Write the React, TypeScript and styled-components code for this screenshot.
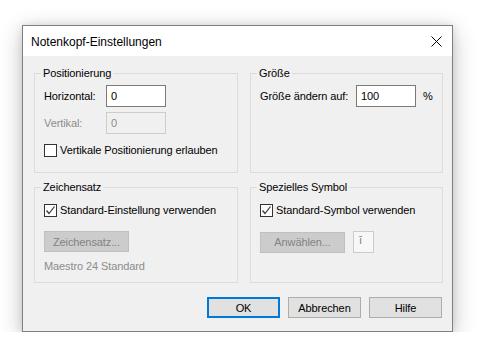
import React from "react";
import styled, { createGlobalStyle } from "styled-components";

const GlobalStyle = createGlobalStyle`
  html, body {
    margin: 0;
    padding: 0;
    background: #ffffff;
  }
  body {
    font-family: "Liberation Sans", Arial, sans-serif;
    font-size: 11px;
    letter-spacing: -0.1px;
    color: #000000;
    white-space: nowrap;
  }
`;

const Page = styled.div`
  padding: 25px 0 0 22px;
`;

const Dialog = styled.div`
  width: 429px;
  height: 305px;
  border: 1px solid #7f7f7f;
  background: #f0f0f0;
  box-shadow: 0 6px 22px rgba(0, 0, 0, 0.24), 0 0 8px rgba(0, 0, 0, 0.1);
  display: flex;
  flex-direction: column;
`;

const TitleBar = styled.div`
  height: 30px;
  background: #ffffff;
  display: flex;
  align-items: center;
  justify-content: space-between;
  padding: 0 10px 0 8px;
`;

const Title = styled.span`
  font-size: 12px;
  letter-spacing: 0;
  padding-top: 1px;
`;

const CloseButton = styled.button`
  width: 12px;
  height: 12px;
  padding: 0;
  border: none;
  background: transparent;
  display: flex;
  align-items: center;
  justify-content: center;
`;

const Body = styled.div`
  flex: 1;
  padding: 17px 10px 13px 11px;
  display: flex;
  flex-direction: column;
`;

const Grid = styled.div`
  display: grid;
  grid-template-columns: 204px 193px;
  grid-template-rows: 100px 96px;
  column-gap: 12px;
  row-gap: 14px;
`;

const Group = styled.div<{ $top: number }>`
  position: relative;
  border: 1px solid #dcdcdc;
  padding: ${(p) => p.$top}px 8px 0 9px;
  display: flex;
  flex-direction: column;
  align-items: flex-start;
`;

const Caption = styled.span`
  position: absolute;
  top: -9px;
  left: 6px;
  padding: 0 2px;
  line-height: 16px;
  background: #f0f0f0;
`;

const FieldRow = styled.div`
  display: flex;
  align-items: center;
  margin-bottom: 5px;
`;

const FieldLabel = styled.span<{ $width: number; $disabled?: boolean }>`
  width: ${(p) => p.$width}px;
  color: ${(p) => (p.$disabled ? "#8c8c8c" : "#000000")};
`;

const TextBox = styled.div<{ $disabled?: boolean }>`
  width: 60px;
  height: 22px;
  box-sizing: border-box;
  border: 1px solid ${(p) => (p.$disabled ? "#cccccc" : "#7a7a7a")};
  background: ${(p) => (p.$disabled ? "#f0f0f0" : "#ffffff")};
  color: ${(p) => (p.$disabled ? "#8c8c8c" : "#000000")};
  display: flex;
  align-items: center;
  padding-left: 4px;
`;

const Unit = styled.span`
  margin-left: 7px;
`;

const CheckRow = styled.label<{ $gap: number }>`
  display: flex;
  align-items: center;
  height: 16px;
  margin-top: ${(p) => p.$gap}px;
`;

const Box = styled.span`
  width: 11px;
  height: 11px;
  border: 1px solid #333333;
  background: #ffffff;
  margin-right: 3px;
  display: flex;
  align-items: center;
  justify-content: center;
`;

const WinButton = styled.button<{ $default?: boolean; $width?: number }>`
  width: ${(p) => p.$width ?? 73}px;
  height: 21px;
  padding: 0;
  font: inherit;
  letter-spacing: inherit;
  color: #000000;
  background: #e1e1e1;
  border: ${(p) => (p.$default ? "2px solid #0078d7" : "1px solid #adadad")};
  box-sizing: border-box;
  &:disabled {
    background: #cccccc;
    border: 1px solid #bfbfbf;
    color: #838383;
  }
`;

const DisabledText = styled.span`
  margin-top: 6px;
  color: #8c8c8c;
  line-height: 16px;
`;

const SymbolRow = styled.div`
  display: flex;
  align-items: center;
  gap: 8px;
  margin-top: 13px;
`;

const SymbolPreview = styled.div`
  width: 21px;
  height: 22px;
  box-sizing: border-box;
  border: 1px solid #cccccc;
  background: #f7f7f7;
  color: #7a7aa0;
  padding: 1px 0 0 5px;
  line-height: 14px;
`;

const Footer = styled.div`
  display: flex;
  justify-content: flex-end;
  gap: 8px;
  margin-top: 14px;
`;

const Check = ({ checked }: { checked?: boolean }) => (
  <Box>
    {checked && (
      <svg width="11" height="11" viewBox="0 0 11 11">
        <path d="M1.5 5.5 L4 8.5 L9.5 1.5" fill="none" stroke="#333" strokeWidth="1.2" />
      </svg>
    )}
  </Box>
);

export default function App() {
  return (
    <Page>
      <GlobalStyle />
      <Dialog>
        <TitleBar>
          <Title>Notenkopf-Einstellungen</Title>
          <CloseButton aria-label="Schließen">
            <svg width="11" height="11" viewBox="0 0 11 11">
              <path d="M0.5 0.5 L10.5 10.5 M10.5 0.5 L0.5 10.5" stroke="#000" strokeWidth="1" />
            </svg>
          </CloseButton>
        </TitleBar>
        <Body>
          <Grid>
            <Group $top={11}>
              <Caption>Positionierung</Caption>
              <FieldRow>
                <FieldLabel $width={62}>Horizontal:</FieldLabel>
                <TextBox>0</TextBox>
              </FieldRow>
              <FieldRow>
                <FieldLabel $width={62} $disabled>
                  Vertikal:
                </FieldLabel>
                <TextBox $disabled>0</TextBox>
              </FieldRow>
              <CheckRow $gap={3}>
                <Check />
                Vertikale Positionierung erlauben
              </CheckRow>
            </Group>
            <Group $top={11}>
              <Caption>Größe</Caption>
              <FieldRow>
                <FieldLabel $width={96}>Größe ändern auf:</FieldLabel>
                <TextBox>100</TextBox>
                <Unit>%</Unit>
              </FieldRow>
            </Group>
            <Group $top={0}>
              <Caption>Zeichensatz</Caption>
              <CheckRow $gap={14}>
                <Check checked />
                Standard-Einstellung verwenden
              </CheckRow>
              <SymbolRow>
                <WinButton disabled $width={85}>
                  Zeichensatz...
                </WinButton>
              </SymbolRow>
              <DisabledText>Maestro 24 Standard</DisabledText>
            </Group>
            <Group $top={0}>
              <Caption>Spezielles Symbol</Caption>
              <CheckRow $gap={14}>
                <Check checked />
                Standard-Symbol verwenden
              </CheckRow>
              <SymbolRow>
                <WinButton disabled $width={85}>
                  Anwählen...
                </WinButton>
                <SymbolPreview>ī</SymbolPreview>
              </SymbolRow>
            </Group>
          </Grid>
          <Footer>
            <WinButton $default>OK</WinButton>
            <WinButton>Abbrechen</WinButton>
            <WinButton>Hilfe</WinButton>
          </Footer>
        </Body>
      </Dialog>
    </Page>
  );
}
